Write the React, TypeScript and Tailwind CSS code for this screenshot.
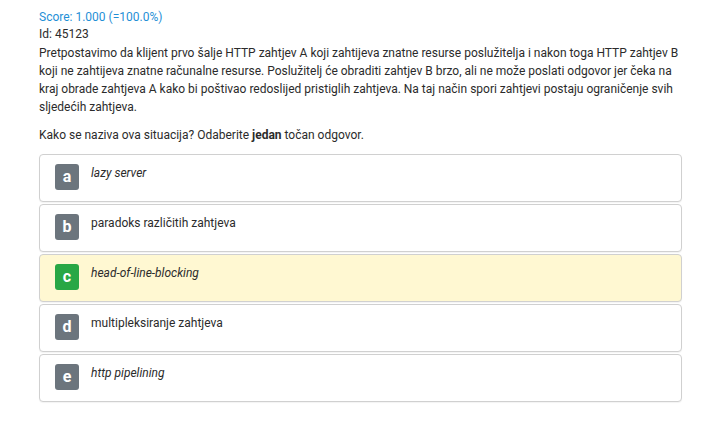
const options = [
  { letter: 'a', text: 'lazy server', italic: true, correct: false },
  { letter: 'b', text: 'paradoks različitih zahtjeva', italic: false, correct: false },
  { letter: 'c', text: 'head-of-line-blocking', italic: true, correct: true },
  { letter: 'd', text: 'multipleksiranje zahtjeva', italic: false, correct: false },
  { letter: 'e', text: 'http pipelining', italic: true, correct: false },
]

export default function App() {
  return (
    <div className="min-h-screen bg-white text-[12px] leading-[18px] text-[#2b2b2b]" style={{ fontFamily: 'Roboto, sans-serif' }}>
      <div className="px-[39px] pt-[8px] w-[721px]">
        <div className="text-[#1f8fd6]">Score: 1.000 (=100.0%)</div>
        <div className="mt-[-1px]">Id: 45123</div>
        <p className="mt-[1px] whitespace-nowrap">
          Pretpostavimo da klijent prvo šalje HTTP zahtjev A koji zahtijeva znatne resurse poslužitelja i nakon toga HTTP zahtjev B<br />
          koji ne zahtijeva znatne računalne resurse. Poslužitelj će obraditi zahtjev B brzo, ali ne može poslati odgovor jer čeka na<br />
          kraj obrade zahtjeva A kako bi poštivao redoslijed pristiglih zahtjeva. Na taj način spori zahtjevi postaju ograničenje svih<br />
          sljedećih zahtjeva.
        </p>
        <p className="mt-[10px]">
          Kako se naziva ova situacija? Odaberite <b className="font-bold">jedan</b> točan odgovor.
        </p>
        <div className="mt-[10px] flex flex-col gap-[2px]">
          {options.map((o) => (
            <div
              key={o.letter}
              className={`flex h-[48px] items-start gap-[12px] rounded-[4px] border border-[#d0d0d0] px-[15px] pt-[9px] shadow-[0_1px_1px_rgba(0,0,0,0.05)] ${o.correct ? 'bg-[#fff8d2]' : 'bg-white'}`}
            >
              <span
                className={`flex h-[26px] w-[24px] items-center justify-center rounded-[3px] text-[16px] font-bold text-white ${o.correct ? 'bg-[#28a745]' : 'bg-[#6c757d]'}`}
              >
                {o.letter}
              </span>
              <span className={o.italic ? 'italic' : ''}>{o.text}</span>
            </div>
          ))}
        </div>
      </div>
    </div>
  )
}
